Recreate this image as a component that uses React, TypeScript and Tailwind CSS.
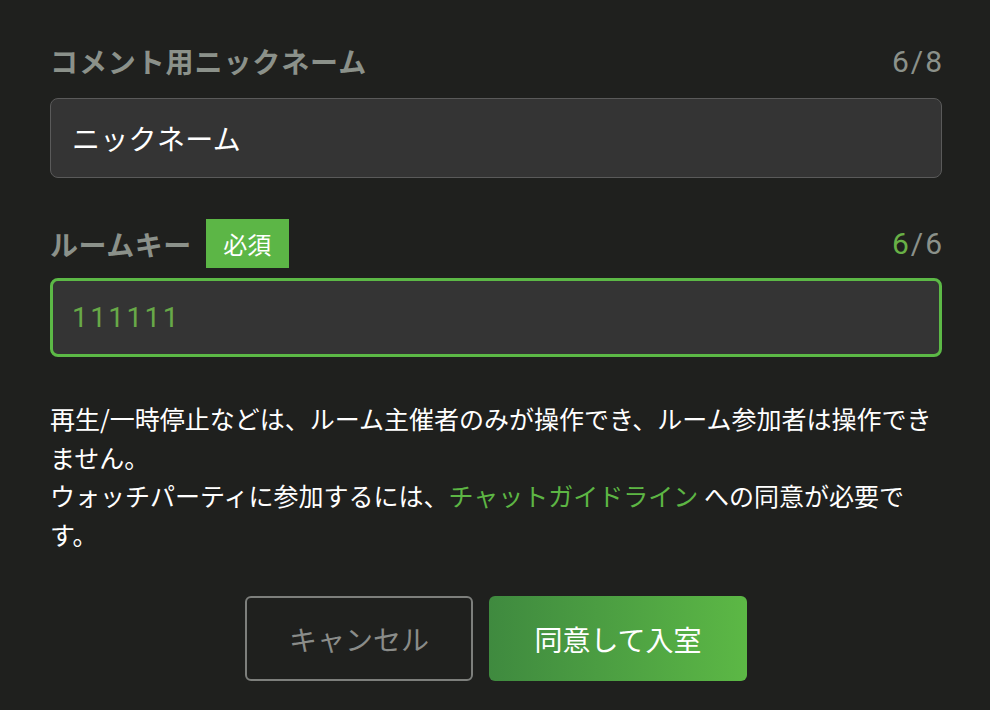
export default function App() {
  const font = { fontFamily: '"Noto Sans CJK JP", "Noto Sans", sans-serif' };
  return (
    <main
      className="min-h-[710px] bg-[#1f201e] pl-[50px] pr-[48px] pt-[41px] text-white"
      style={font}
    >
      {/* ニックネーム */}
      <div className="flex h-[40px] items-center justify-between">
        <span className="text-[28px] font-bold tracking-[0.9px] text-[#8b918a]">
          コメント用ニックネーム
        </span>
        <span className="-mr-[2px] font-['Roboto',sans-serif] text-[30px] tracking-[2px] text-[#8b918a]">
          6/8
        </span>
      </div>
      <div className="mt-[17px] flex h-[80px] items-center rounded-lg border border-[#5a5a5a] bg-[#343434] px-[21px]">
        <span className="text-[28px] tracking-[0.3px] text-white">ニックネーム</span>
      </div>

      {/* ルームキー */}
      <div className="mt-[41px] flex h-[49px] items-center justify-between">
        <div className="flex items-center gap-[14px]">
          <span className="text-[28px] font-bold tracking-[0.5px] text-[#8b918a]">
            ルームキー
          </span>
          <span className="flex h-[49px] w-[83px] items-center justify-center bg-[#5cb646] text-[24px] text-white">
            必須
          </span>
        </div>
        <span className="-mr-[2px] font-['Roboto',sans-serif] text-[30px] tracking-[2px] text-[#8b918a]">
          <span className="text-[#68b046]">6</span>/6
        </span>
      </div>
      <div className="mt-[10px] flex h-[79px] items-center rounded-lg border-[3px] border-[#5cb946] bg-[#343434] px-[19px]">
        <span className="font-['Roboto',sans-serif] text-[28px] tracking-[2.4px] text-[#68a948]">
          111111
        </span>
      </div>

      {/* 説明 */}
      <div className="mt-[42px] text-[25px] leading-[38.5px] text-white">
        <p>再生/一時停止などは、ルーム主催者のみが操作でき、ルーム参加者は操作できません。</p>
        <p>
          ウォッチパーティに参加するには、
          <span className="text-[#5db644]">チャットガイドライン</span> への同意が必要です。
        </p>
      </div>

      {/* ボタン */}
      <div className="mt-[43px] flex justify-center gap-[16px]">
        <button className="h-[85px] w-[228px] rounded-md border-2 border-[#7d7f7c] text-[28px] text-[#8a8c89]">
          キャンセル
        </button>
        <button className="h-[85px] w-[258px] rounded-md bg-gradient-to-r from-[#3f8a3f] to-[#5cb845] text-[28px] text-white">
          同意して入室
        </button>
      </div>
    </main>
  );
}
